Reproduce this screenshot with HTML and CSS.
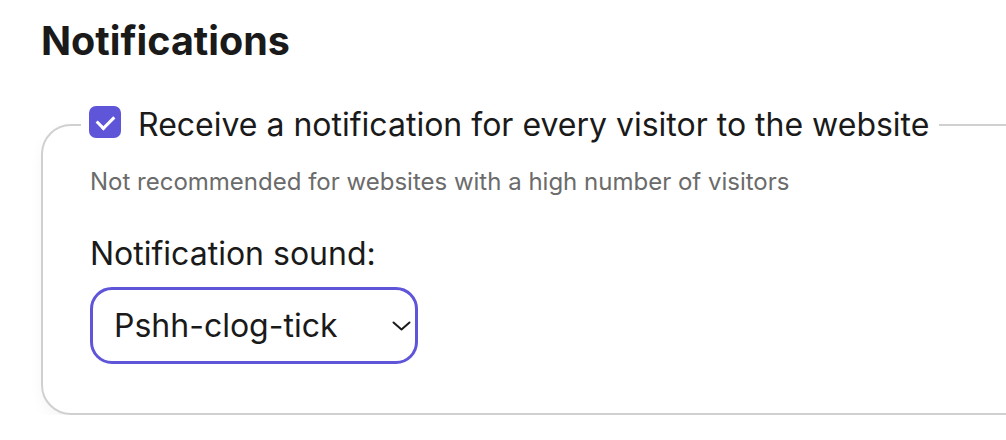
FILE: index.html
```html
<!DOCTYPE html>
<html lang="en">
<head>
    <meta charset="UTF-8">
    <meta name="viewport" content="width=device-width, initial-scale=1.0">
    <title>Notifications</title>
    <link rel="stylesheet" href="styles.css">
</head>
<body>
    <div class="settings">
        <h1 class="settings-title">Notifications</h1>
        <fieldset class="notify-box">
            <legend class="notify-legend">
                <label class="check-label">
                    <input type="checkbox" class="check" checked>
                    <span>Receive a notification for every visitor to the website</span>
                </label>
            </legend>
            <p class="hint">Not recommended for websites with a high number of visitors</p>
            <label class="sound-label" for="sound">Notification sound:</label>
            <div class="select-wrap">
                <select id="sound" class="sound-select">
                    <option>Pshh-clog-tick</option>
                    <option>Ding</option>
                    <option>Pop</option>
                </select>
                <svg class="chevron" width="19" height="10" viewBox="0 0 19 10">
                    <path d="M1.5 1.5l8 7 8-7" fill="none" stroke="#1a1a1a" stroke-width="2" stroke-linecap="round" stroke-linejoin="round"/>
                </svg>
            </div>
        </fieldset>
    </div>
</body>
</html>
```

FILE: styles.css
```css
/* Notification settings panel */
body {
    margin: 0;
    font-family: Inter, "Noto Sans", sans-serif;
    color: #1a1a1a;
    background: #fff;
    overflow: hidden;
}
.settings {
    padding: 17px 0 0 41px;
}
.settings-title {
    font-size: 39.5px;
    font-weight: 700;
    margin: 0 0 40px 0;
    line-height: 48px;
}
.notify-box {
    width: 1000px;
    margin: 0;
    border: 2px solid #d0d0d0;
    border-radius: 30px;
    padding: 0 0 49px 47px;
    box-shadow: 0 6px 14px rgba(0, 0, 0, 0.04);
}
.notify-legend {
    padding: 0 10px 0 8px;
    margin-left: -9px;
}
.check-label {
    display: flex;
    align-items: center;
    gap: 17px;
    font-size: 32px;
}
.check {
    appearance: none;
    width: 32px;
    height: 32px;
    margin: -5px 0 0 0;
    border-radius: 7px;
    background: #5e55d9;
    display: grid;
    place-items: center;
}
.check::after {
    content: "";
    width: 14px;
    height: 8px;
    border-left: 3.5px solid #fff;
    border-bottom: 3.5px solid #fff;
    transform: translateY(-2px) rotate(-45deg);
}
.hint {
    font-size: 24px;
    color: #6b6b6b;
    margin: 23px 0 0 0;
}
.sound-label {
    display: block;
    font-size: 32px;
    margin-top: 38px;
}
.select-wrap {
    position: relative;
    width: 328px;
    margin-top: 14px;
}
.sound-select {
    appearance: none;
    width: 100%;
    height: 77px;
    border: 3px solid #5e55d9;
    border-radius: 22px;
    background: #fff;
    font-family: inherit;
    font-size: 32px;
    color: #1a1a1a;
    padding: 0 0 0 21px;
}
.chevron {
    position: absolute;
    right: 7px;
    top: 34px;
}
```
